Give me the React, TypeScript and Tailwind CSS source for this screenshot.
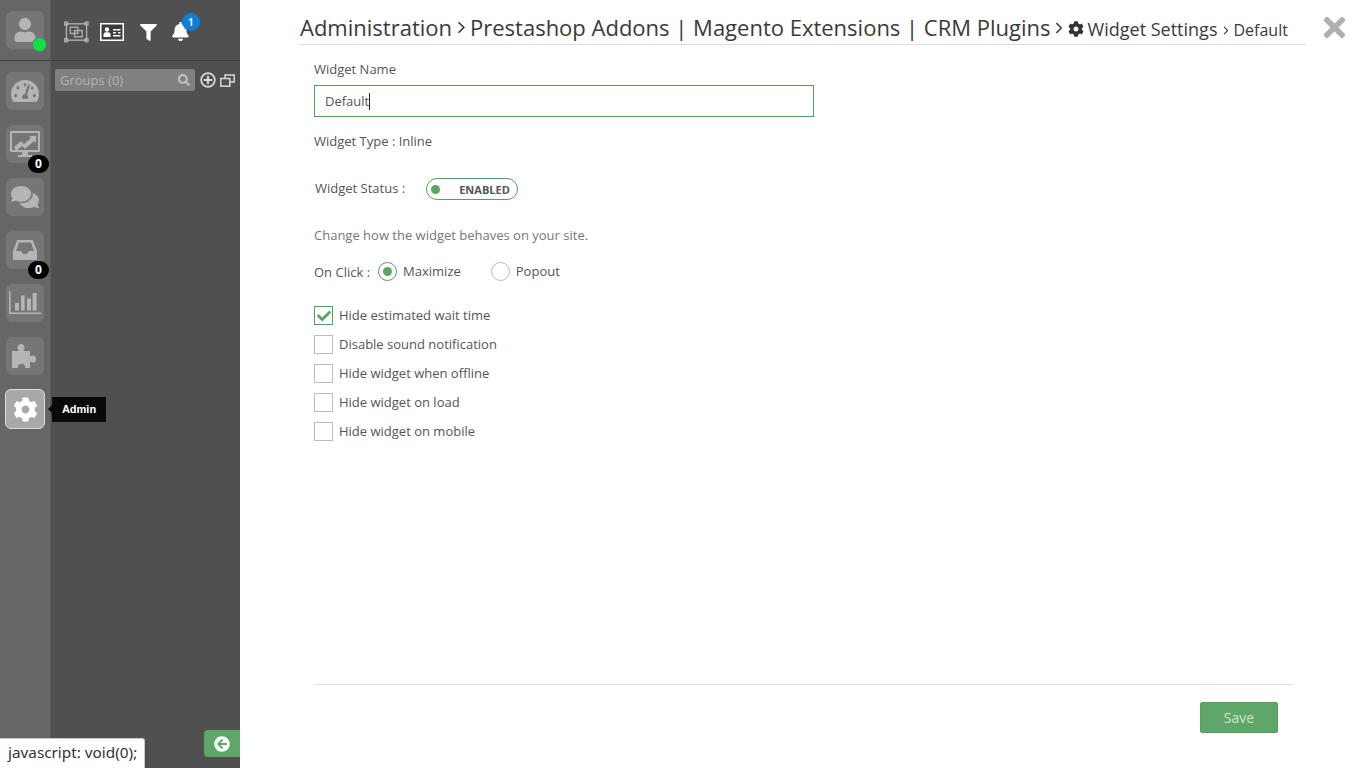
import React from "react";
import { FaUser, FaTachometerAlt, FaComments, FaCog, FaFilter, FaBell, FaSearch, FaCheck, FaTimes, FaArrowCircleLeft } from "react-icons/fa";

const font = { fontFamily: '"Open Sans", sans-serif' };

function RailButton({ children, badge, active }: { children: React.ReactNode; badge?: string; active?: boolean }) {
  return (
    <div className="relative flex justify-center">
      <div className={active ? "w-[40px] h-[40px] -my-px rounded-[6px] bg-[#a9a9a9] border border-[#dcdcdc] flex items-center justify-center text-white" : "w-[38px] h-[38px] rounded-[6px] bg-[#767676] flex items-center justify-center text-[#b5b5b5]"}>
        {children}
      </div>
      {badge && (
        <div className="absolute left-[28px] top-[30px] w-[21px] h-[18px] rounded-full bg-black text-white text-[12px] font-bold flex items-center justify-center">{badge}</div>
      )}
    </div>
  );
}

function Check({ label, checked }: { label: string; checked?: boolean }) {
  return (
    <div className="flex items-center h-[19px] mb-[10px]">
      <div className={checked ? "w-[19px] h-[19px] border border-[#559e60] flex items-center justify-center" : "w-[19px] h-[19px] border border-[#bbbbbb]"}>
        {checked && <FaCheck className="text-[#5aa662] text-[14px]" />}
      </div>
      <span className="ml-[6px] text-[13px] text-[#555]">{label}</span>
    </div>
  );
}

function Sep({ h, cls }: { h: number; cls: string }) {
  return (
    <span className={cls}>
      <svg width={h * 0.62} height={h} viewBox="0 0 8 13" fill="none" stroke="#3a3a3a" strokeWidth="1.6">
        <path d="M1.5 1.2 L6.8 6.5 L1.5 11.8" />
      </svg>
    </span>
  );
}

export default function App() {
  return (
    <div className="relative w-[1366px] h-[768px] overflow-hidden flex bg-white" style={font}>
      <aside className="w-[240px] h-full flex shrink-0 bg-[#505050]">
        <div className="w-[51px] h-full bg-[#666666] border-r border-[#5a5a5a] flex flex-col shrink-0">
          <div className="h-[61px] border-b border-[#3f3f3f] pt-[11px] mb-[11px] relative flex justify-center">
            <div className="w-[38px] h-[38px] rounded-[6px] bg-[#767676] flex items-center justify-center text-[#b5b5b5]"><FaUser size={24} /></div>
            <div className="absolute left-[32px] top-[37px] w-[15px] h-[15px] rounded-full bg-[#12e04a] border border-[#6f6f6f]" />
          </div>
          <div className="flex flex-col gap-[15px]">
            <RailButton><FaTachometerAlt size={28} /></RailButton>
            <RailButton badge="0">
              <svg width="30" height="30" viewBox="0 0 30 30" fill="currentColor">
                <path fillRule="evenodd" d="M1 2h28a1 1 0 0 1 1 1v19a1 1 0 0 1-1 1H18v3h4v2H8v-2h4v-3H1a1 1 0 0 1-1-1V3a1 1 0 0 1 1-1zm1 2v17h26V4z" />
                <path d="M4 18l7-6 3 3 7-6-2-2h7v7l-2-2-9 8-3-3-6 5z" />
              </svg>
            </RailButton>
            <RailButton><FaComments size={28} /></RailButton>
            <RailButton badge="0">
              <svg width="24" height="20" viewBox="0 0 24 20" fill="currentColor">
                <path fillRule="evenodd" d="M5 0h14a1 1 0 0 1 1 .7L24 11v8a1 1 0 0 1-1 1H1a1 1 0 0 1-1-1v-8L4 .7A1 1 0 0 1 5 0zm1 2.5L3 11h5l2 3h4l2-3h5l-3-8.5z" />
              </svg>
            </RailButton>
            <RailButton>
              <svg width="32" height="24" viewBox="0 0 32 24" fill="currentColor">
                <path d="M0 0h1.6v21.4H32V23H0z" />
                <rect x="6" y="12" width="4" height="7.5" />
                <rect x="12" y="4.5" width="3.6" height="15" />
                <rect x="18" y="7.5" width="4" height="12" />
                <rect x="23.6" y="2" width="4" height="17.5" />
              </svg>
            </RailButton>
            <RailButton>
              <svg width="27" height="24" viewBox="0 0 27 24" fill="currentColor">
                <path d="M0 7h6.5V6a3.5 3.5 0 1 1 5 0v1H18v5h1.2a3.4 3.4 0 1 1 0 6H18v6h-5v-1.5a3.6 3.6 0 0 0-7 0V24H0z" />
              </svg>
            </RailButton>
            <RailButton active><FaCog size={25} /></RailButton>
          </div>
        </div>
        <div className="flex-1 flex flex-col min-w-0">
          <div className="h-[61px] border-b border-[#3f3f3f] flex items-center relative shrink-0">
            <svg className="absolute left-[13px] top-[21px]" width="25" height="22" viewBox="0 0 26 22" fill="none" stroke="#b0b0b0" strokeWidth="1.4">
              <rect x="2.5" y="2.5" width="21" height="17" />
              <rect x="6.5" y="6" width="8" height="6.5" />
              <rect x="11" y="9.5" width="8" height="6.5" />
              <rect x="0.7" y="0.7" width="3" height="3" />
              <rect x="22" y="0.7" width="3" height="3" />
              <rect x="0.7" y="18" width="3" height="3" />
              <rect x="22" y="18" width="3" height="3" />
            </svg>
            <svg className="absolute left-[49px] top-[23px]" width="24" height="18" viewBox="0 0 24 18">
              <rect x="0.75" y="0.75" width="22.5" height="16.5" fill="#3c3c3c" stroke="#ffffff" strokeWidth="1.5" />
              <circle cx="7" cy="6.5" r="2.2" fill="#ffffff" />
              <path d="M3.5 14v-2.5q0-2 2-2.2h3q2 .2 2 2.2V14z" fill="#ffffff" />
              <path d="M13 6h7.5v1.5H13zM13 9h3v1.5h-3zM18 9h2.5v1.5H18zM13 12h7.5v1.5H13z" fill="#ffffff" />
            </svg>
            <FaFilter className="absolute left-[89px] top-[24px] text-white" size={17} />
            <FaBell className="absolute left-[120px] top-[22px] text-white" size={19} />
            <div className="absolute left-[131px] top-[13px] w-[18px] h-[18px] rounded-full bg-[#0e7fd6] text-white text-[11px] font-semibold flex items-center justify-center">1</div>
          </div>
          <div className="flex items-center mt-[8px] ml-[4px]">
            <div className="w-[140px] h-[22px] bg-[#808080] rounded-[2px] flex items-center justify-between pl-[5px] pr-[5px] text-[13px] text-[#b4b4b4]">
              <span className="mt-[2px]">Groups (0)</span>
              <FaSearch size={12} className="text-[#c4c4c4]" />
            </div>
            <svg className="ml-[5px]" width="16" height="16" viewBox="0 0 16 16" fill="none" stroke="#d8d8d8">
              <circle cx="8" cy="8" r="6.8" strokeWidth="1.8" />
              <path d="M8 3.8v8.4M3.8 8h8.4" strokeWidth="2" />
            </svg>
            <svg className="ml-[4px]" width="15" height="13" viewBox="0 0 15 13" fill="none" stroke="#d8d8d8" strokeWidth="1.5">
              <path d="M5 4V.9h9.2v7H10" />
              <rect x="0.8" y="4.5" width="9" height="7.7" />
            </svg>
          </div>
        </div>
      </aside>

      <main className="flex-1 h-full flex flex-col min-w-0 pl-[60px] pr-[60px]">
        <div className="h-[45px] w-[1006px] border-b border-[#dddddd] flex items-end pb-[2px] text-[#3a3a3a] whitespace-nowrap shrink-0">
          <span className="text-[22px] leading-[30px]">Administration</span>
          <Sep h={13} cls="w-[18px] h-[30px] flex items-center justify-center" />
          <span className="text-[22px] leading-[30px]">Prestashop Addons | Magento Extensions | CRM Plugins</span>
          <Sep h={12} cls="w-[17px] h-[30px] flex items-center justify-center -mb-[1px]" />
          <FaCog className="text-[#333] text-[16px] mb-[5px] mr-[4px]" />
          <span className="text-[18px] leading-[28px] -mb-[1px]">Widget Settings</span>
          <Sep h={9} cls="w-[16px] h-[28px] flex items-center justify-center -mb-[2px]" />
          <span className="text-[16px] leading-[28px] -mb-[2px]">Default</span>
        </div>

        <div className="flex-1 flex flex-col pl-[14px] pr-[14px]">
          <label className="text-[13px] text-[#555] mt-[15px] leading-[18px]">Widget Name</label>
          <div className="mt-[7px] w-[500px] h-[32px] border border-[#559e60] flex items-center pl-[10px] text-[13px] text-[#555]">
            <span className="mt-[2px]">Default</span><span className="inline-block w-px h-[17px] bg-[#222]" />
          </div>
          <div className="mt-[15px] text-[13px] text-[#555] leading-[18px]">Widget Type : Inline</div>
          <div className="mt-[28px] flex items-center h-[22px]">
            <span className="ml-px text-[13px] text-[#555]">Widget Status :</span>
            <div className="ml-[21px] w-[92px] h-[22px] rounded-full border border-[#559e60] flex items-center pl-[4px]">
              <span className="w-[9px] h-[9px] rounded-full bg-[#5aa662]" />
              <span className="ml-[19px] text-[11px] font-bold text-[#555] mt-[2px]">ENABLED</span>
            </div>
          </div>
          <div className="mt-[26px] text-[13px] text-[#777] leading-[18px]">Change how the widget behaves on your site.</div>
          <div className="mt-[18px] flex items-center h-[19px] text-[13px] text-[#555]">
            <span className="mt-[2px]">On Click :</span>
            <span className="ml-[8px] w-[19px] h-[19px] rounded-full border border-[#559e60] flex items-center justify-center">
              <span className="w-[9px] h-[9px] rounded-full bg-[#5aa662]" />
            </span>
            <span className="ml-[6px]">Maximize</span>
            <span className="ml-[30px] w-[19px] h-[19px] rounded-full border border-[#bbbbbb]" />
            <span className="ml-[6px]">Popout</span>
          </div>
          <div className="mt-[25px]">
            <Check label="Hide estimated wait time" checked />
            <Check label="Disable sound notification" />
            <Check label="Hide widget when offline" />
            <Check label="Hide widget on load" />
            <Check label="Hide widget on mobile" />
          </div>
          <div className="mt-auto mb-[35px] border-t border-[#dddddd] pt-[17px] flex justify-end pr-[14px]">
            <button className="w-[78px] h-[31px] bg-[#5fa768] border border-[#559e60] rounded-[2px] text-[14px] text-[#cfe8d0]">Save</button>
          </div>
        </div>
      </main>

      <FaTimes className="absolute left-[1319px] top-[12px] text-[#b0b0b0]" size={31} />

      <div className="absolute left-[52px] top-[397px] h-[25px] w-[54px] bg-[#0a0a0a] text-white text-[11px] font-bold flex items-center justify-center" style={{ fontFamily: '"Liberation Sans", sans-serif' }}>
        Admin
        <span className="absolute -left-[4px] top-[8px] w-0 h-0 border-y-[4px] border-y-transparent border-r-[4px] border-r-[#0a0a0a]" />
      </div>

      <div className="absolute left-[204px] top-[730px] w-[36px] h-[27px] bg-[#5fa768] rounded-l-[4px] flex items-center justify-center text-white">
        <FaArrowCircleLeft size={16} />
      </div>

      <div className="absolute left-0 bottom-0 h-[30px] w-[145px] bg-white border-t border-r border-[#c8c8c8] rounded-tr-[3px] pl-[8px] pb-[3px] text-[15.3px] text-[#333] flex items-center" style={{ fontFamily: '"Noto Sans", sans-serif' }}>
        javascript: void(0);
      </div>
    </div>
  );
}
